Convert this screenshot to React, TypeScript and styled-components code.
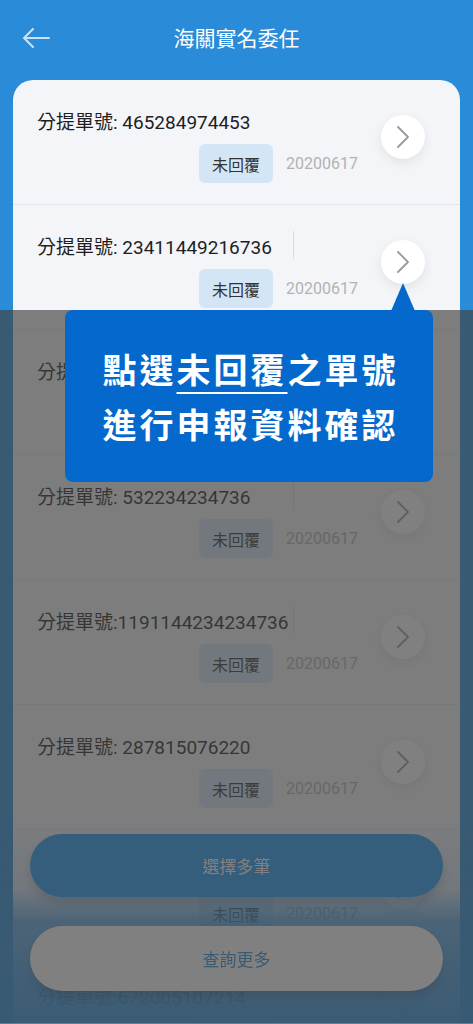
import React from 'react';
import styled, { createGlobalStyle } from 'styled-components';

const BLUE = '#2a8bd8';

const GlobalStyle = createGlobalStyle`
  html, body {
    margin: 0;
    padding: 0;
  }
  body {
    font-family: Roboto, "Noto Sans CJK TC", sans-serif;
    background: ${BLUE};
  }
  #root {
    height: 1024px;
    overflow: hidden;
  }
`;

const Page = styled.div`
  height: 1024px;
  background: ${BLUE};
  display: flex;
  flex-direction: column;
`;

const Header = styled.header`
  height: 76px;
  flex-shrink: 0;
  display: grid;
  grid-template-columns: 70px 1fr 70px;
  align-items: center;
`;

const BackButton = styled.button`
  background: none;
  border: 0;
  padding: 0 0 0 22px;
  height: 100%;
  display: flex;
  align-items: center;
  color: #cde2f5;
`;

const Title = styled.h1`
  margin: 0 0 2px;
  text-align: center;
  color: #fff;
  font-size: 21px;
  font-weight: 400;
  font-family: "Noto Sans CJK TC", sans-serif;
`;

const Card = styled.div`
  margin: 4px 13px 0;
  flex: 1;
  background: #f4f5f9;
  border-radius: 20px 20px 0 0;
  overflow: hidden;
`;

const Row = styled.div`
  height: 125px;
  box-sizing: border-box;
  display: flex;
  padding: 0 35px 0 24px;
  border-bottom: 1px solid #e3e5ea;
`;

const Info = styled.div`
  flex: 1;
  padding-top: 30px;
  display: flex;
  flex-direction: column;
`;

const BillNo = styled.div`
  display: grid;
  grid-template-columns: 256px 1px;
  align-items: center;
  height: 26px;
  font-size: 19px;
  line-height: 26px;
  color: #1e1e1e;
  white-space: nowrap;
`;

const Divider = styled.span<{ $shown: boolean }>`
  height: 28px;
  margin-top: -6px;
  background: ${(p) => (p.$shown ? '#d3dde8' : 'transparent')};
`;

const Meta = styled.div`
  margin-top: 8px;
  display: flex;
  justify-content: flex-end;
  align-items: center;
  gap: 13px;
`;

const Badge = styled.span`
  height: 39px;
  padding: 0 13px;
  display: flex;
  align-items: center;
  border-radius: 6px;
  background: #d4e6f6;
  color: #333;
  font-size: 16px;
  font-family: "Noto Sans CJK TC", sans-serif;
`;

const DateText = styled.span`
  font-size: 16px;
  color: #b2b2b2;
`;

const Arrow = styled.button`
  width: 44px;
  height: 44px;
  margin: 35px 0 0 23px;
  flex-shrink: 0;
  padding: 0;
  border: 0;
  border-radius: 50%;
  background: #fff;
  box-shadow: 0 4px 12px rgba(0, 0, 0, 0.08);
  display: grid;
  place-items: center;
  color: #9a9a9a;
`;

const Footer = styled.footer`
  position: fixed;
  left: 0;
  right: 0;
  bottom: 0;
  height: 205px;
  box-sizing: border-box;
  padding: 15px 30px 0;
  display: flex;
  flex-direction: column;
  gap: 29px;
  z-index: 1;
  background: linear-gradient(
    to bottom,
    rgba(42, 139, 216, 0) 0%,
    rgba(42, 139, 216, 0.15) 34%,
    rgba(42, 139, 216, 0.72) 50%,
    rgba(42, 139, 216, 0.88) 80%,
    rgba(42, 139, 216, 0.97) 100%
  );
`;

const PillButton = styled.button<{ $primary?: boolean }>`
  height: ${(p) => (p.$primary ? 63 : 65)}px;
  flex-shrink: 0;
  border: 0;
  border-radius: 33px;
  font-size: 17px;
  font-family: "Noto Sans CJK TC", sans-serif;
  background: ${(p) => (p.$primary ? '#1e98f5' : '#fff')};
  color: ${(p) => (p.$primary ? '#fff' : BLUE)};
  box-shadow: 0 6px 10px rgba(0, 0, 0, 0.18);
`;

const Dimmer = styled.div`
  position: fixed;
  top: 310px;
  left: 0;
  right: 0;
  bottom: 1px;
  z-index: 2;
  background: rgba(66, 66, 66, 0.67);
`;

const Callout = styled.div`
  position: absolute;
  top: 0;
  left: 65px;
  width: 368px;
  height: 172px;
  box-sizing: border-box;
  padding-left: 3px;
  border-radius: 8px;
  background: #0468cc;
  color: #fff;
  font-family: "Noto Sans CJK TC", sans-serif;
  font-size: 34px;
  font-weight: 700;
  line-height: 55px;
  letter-spacing: 3px;
  display: flex;
  flex-direction: column;
  justify-content: center;
  align-items: center;

  &::before {
    content: '';
    position: absolute;
    top: -27px;
    left: 326px;
    border-left: 12px solid transparent;
    border-right: 12px solid transparent;
    border-bottom: 28px solid #0468cc;
  }
`;

const Marked = styled.span`
  text-decoration: underline;
  text-decoration-thickness: 2px;
  text-underline-offset: 9px;
`;

type Bill = {
  no: string;
  date: string;
  divider?: boolean;
};

const bills: Bill[] = [
  { no: '分提單號: 465284974453', date: '20200617' },
  { no: '分提單號: 23411449216736', date: '20200617', divider: true },
  { no: '分提單號: 751203341126', date: '20200617' },
  { no: '分提單號: 532234234736', date: '20200617', divider: true },
  { no: '分提單號:1191144234234736', date: '20200617', divider: true },
  { no: '分提單號: 287815076220', date: '20200617' },
  { no: '分提單號: 318846209315', date: '20200617' },
  { no: '分提單號:672005107214', date: '20200617' },
];

const BackIcon = () => (
  <svg width="28" height="22" viewBox="0 0 28 22" fill="none" stroke="currentColor" strokeWidth="2" strokeLinecap="round">
    <path d="M2 11h25M11 2 2 11l9 9" />
  </svg>
);

const ChevronIcon = () => (
  <svg width="14" height="22" viewBox="0 0 14 22" fill="none" stroke="currentColor" strokeWidth="1.8" strokeLinecap="round" strokeLinejoin="round">
    <path d="M2 1l10 10-10 10" />
  </svg>
);

export default function App() {
  return (
    <>
      <GlobalStyle />
      <Page>
        <Header>
          <BackButton aria-label="back">
            <BackIcon />
          </BackButton>
          <Title>海關實名委任</Title>
        </Header>
        <Card>
          {bills.map((bill, i) => (
            <Row key={i}>
              <Info>
                <BillNo>
                  <span>{bill.no}</span>
                  <Divider $shown={!!bill.divider} />
                </BillNo>
                <Meta>
                  <Badge>未回覆</Badge>
                  <DateText>{bill.date}</DateText>
                </Meta>
              </Info>
              <Arrow aria-label="open">
                <ChevronIcon />
              </Arrow>
            </Row>
          ))}
        </Card>
        <Footer>
          <PillButton $primary>選擇多筆</PillButton>
          <PillButton>查詢更多</PillButton>
        </Footer>
      </Page>
      <Dimmer>
        <Callout>
          <div>
            點選<Marked>未回覆</Marked>之單號
          </div>
          <div>進行申報資料確認</div>
        </Callout>
      </Dimmer>
    </>
  );
}
